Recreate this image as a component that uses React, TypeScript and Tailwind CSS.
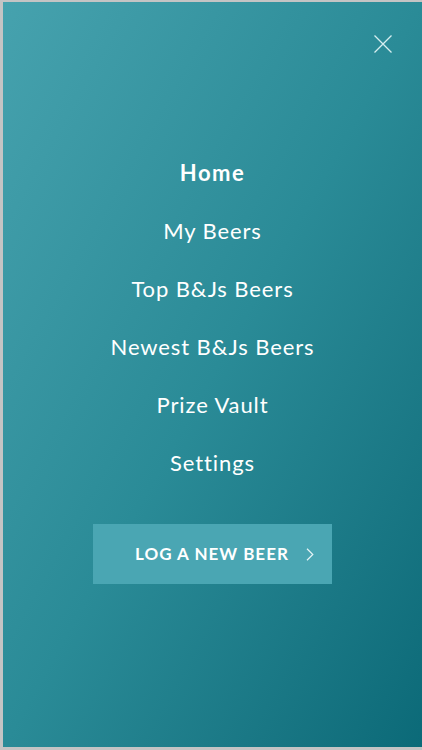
const LINKS = ["My Beers", "Top B&Js Beers", "Newest B&Js Beers", "Prize Vault", "Settings"];

export default function App() {
  return (
    <div className="h-[750px] w-[422px] bg-[#c4c4c4] pt-[2px] pb-[3px] pl-[3px]">
      <div className="relative flex h-full flex-col items-center bg-gradient-to-br from-[#46a2ae] via-[#2a8b97] to-[#0b6a78] font-['Lato',sans-serif] text-white">
        {/* Close */}
        <button className="absolute right-[29px] top-[32px] p-0">
          <svg width="20" height="20" viewBox="0 0 20 20" fill="none" stroke="#d6eef0" strokeWidth="1.3">
            <path d="M1.5 1.5 L18.5 18.5 M18.5 1.5 L1.5 18.5" />
          </svg>
        </button>

        <nav className="mt-[154px] flex flex-col items-center">
          <a className="flex h-[32px] items-center text-[22px] font-bold tracking-[1.5px]">Home</a>
          {LINKS.map((l) => (
            <a key={l} className="mt-[26px] flex h-[32px] items-center text-[22px] font-normal tracking-[0.9px]">
              {l}
            </a>
          ))}
        </nav>

        <button className="mt-[46px] flex h-[60px] w-[239px] items-center bg-[#4aa6b3] pl-[42px] text-[17px] font-bold tracking-[1px] text-white">
          LOG A NEW BEER
          <svg className="ml-[17px]" width="8" height="13" viewBox="0 0 8 13" fill="none" stroke="#e6f4f6" strokeWidth="1.2">
            <path d="M1 0.8 L6.8 6.5 L1 12.2" />
          </svg>
        </button>
      </div>
    </div>
  );
}
